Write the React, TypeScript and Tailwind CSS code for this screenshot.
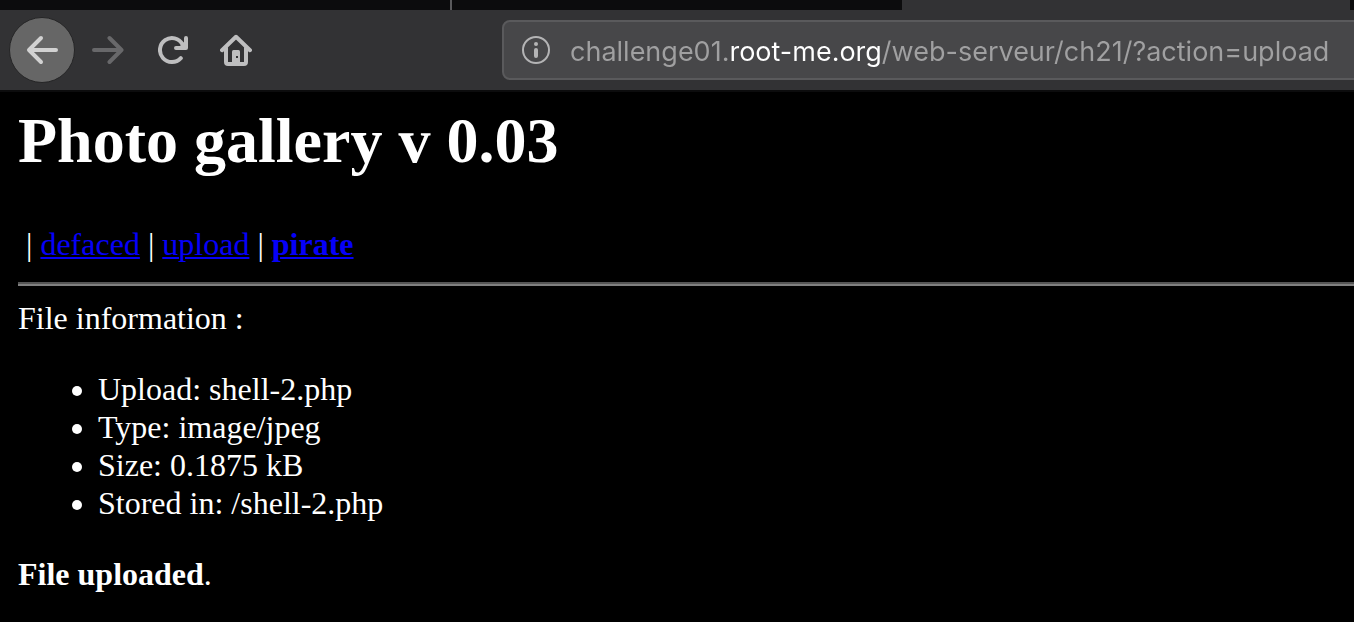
import React from "react";

function BackIcon() {
  return (
    <svg viewBox="0 0 32 32" className="size-8" fill="none" stroke="currentColor" strokeWidth="4" strokeLinecap="round" strokeLinejoin="round" aria-hidden="true">
      <path d="M15 4 3 16l12 12M3.500 16H30" />
    </svg>
  );
}

function ForwardIcon() {
  return (
    <svg viewBox="0 0 32 32" className="size-8" fill="none" stroke="currentColor" strokeWidth="4" strokeLinecap="round" strokeLinejoin="round" aria-hidden="true">
      <path d="M17.500 4l12 12-12 12M29 16H2" />
    </svg>
  );
}

function ReloadIcon() {
  return (
    <svg viewBox="0 0 32 32" className="size-8" fill="none" stroke="currentColor" strokeWidth="4" strokeLinecap="round" strokeLinejoin="round" aria-hidden="true">
      <path d="M22.800 24.200A12 12 0 1 1 24.500 10.300" />
      <path d="M28 4v10H18" />
      <path d="M28 6v8h-8z" fill="currentColor" stroke="none" />
    </svg>
  );
}

function HomeIcon() {
  return (
    <svg viewBox="0 0 32 32" className="size-8" fill="none" stroke="currentColor" strokeWidth="4" strokeLinecap="round" strokeLinejoin="round" aria-hidden="true">
      <path d="M2 16.200 16 2.800l14 13.400" />
      <path d="M6 14v14a2 2 0 0 0 2 2h16a2 2 0 0 0 2-2V14" />
      <path d="M12 30V17.500A1.500 1.500 0 0 1 13.500 16h5a1.500 1.500 0 0 1 1.500 1.500V30z" fill="currentColor" stroke="none" />
      <path d="M16 22h2v2h-2z" fill="#323234" stroke="none" />
    </svg>
  );
}

function InfoIcon() {
  return (
    <svg viewBox="0 0 28 28" className="size-7" fill="none" stroke="currentColor" aria-hidden="true">
      <circle cx="14" cy="14" r="13" strokeWidth="2" />
      <circle cx="14" cy="8" r="2" fill="currentColor" stroke="none" />
      <path d="M14 14v6" strokeWidth="4" strokeLinecap="round" />
    </svg>
  );
}

const details = [
  "Upload: shell-2.php",
  "Type: image/jpeg",
  "Size: 0.1875 kB",
  "Stored in: /shell-2.php",
];

export default function App() {
  return (
    <div className="min-h-screen overflow-x-hidden bg-black">
      <header className="border-b-2 border-[#0c0c0d] bg-[#323234]">
        <div className="flex h-2.5">
          <div className="w-[452px] border-r-2 border-[#5a5a5c] bg-[#0c0c0d]" />
          <div className="w-[450px] bg-[#0c0c0d]" />
          <div className="flex-1" />
          <div className="w-1 bg-[#0c0c0d]" />
        </div>
        <div className="flex h-20 items-center pl-[9px] text-[#bebebf]">
          <button type="button" aria-label="Back" className="flex size-[66px] shrink-0 items-center justify-center rounded-full border border-[#252526] bg-[#666666] text-[#d2d2d2]">
            <BackIcon />
          </button>
          <button type="button" aria-label="Forward" disabled className="ml-[17px] shrink-0 text-[#68686a]">
            <ForwardIcon />
          </button>
          <button type="button" aria-label="Reload" className="ml-[34px] shrink-0">
            <ReloadIcon />
          </button>
          <button type="button" aria-label="Home" className="ml-[30px] shrink-0">
            <HomeIcon />
          </button>
          <div className="-mr-2 ml-[250px] flex h-[60px] min-w-0 flex-1 items-center rounded-lg border-2 border-[#5a5a5c] bg-[#474749] pl-[18px]">
            <button type="button" aria-label="Site information" className="shrink-0 text-[#b4b4b5]">
              <InfoIcon />
            </button>
            <input
              type="text"
              aria-label="Address"
              spellCheck={false}
              defaultValue="challenge01.root-me.org/web-serveur/ch21/?action=upload"
              className="ml-5 h-10 min-w-0 flex-1 bg-[linear-gradient(to_right,#a0a0a1_160px,#fff_160px,#fff_312px,#a0a0a1_312px)] bg-clip-text pt-1 font-['Inter',sans-serif] text-[27px] text-transparent outline-none"
            />
          </div>
        </div>
      </header>

      <main className="pt-[11px] pl-[18px] font-['Liberation_Serif',serif] text-[32px] leading-[38px] text-white">
        <h1 className="text-[64px] leading-[76px] font-bold">Photo gallery v 0.03</h1>
        <nav className="mt-[46px] whitespace-pre text-[#0600f8] decoration-2 underline-offset-2">
          <span className="text-white"> | </span>
          <a href="?galerie=defaced" className="underline decoration-2">defaced</a>
          <span className="text-white"> | </span>
          <a href="?action=upload" className="underline decoration-2">upload</a>
          <span className="text-white"> | </span>
          <a href="?galerie=pirate" className="font-bold underline decoration-2">pirate</a>
        </nav>
        <hr className="mt-[19px] border-t-2 border-b-2 border-t-[#555555] border-b-[#808080]" />
        <p className="mt-[13px]">File information :</p>
        <ul className="mt-[33px] list-disc pl-20">
          {details.map((line) => (
            <li key={line}>{line}</li>
          ))}
        </ul>
        <p className="mt-[33px]">
          <b>File uploaded</b>.
        </p>
      </main>
    </div>
  );
}
